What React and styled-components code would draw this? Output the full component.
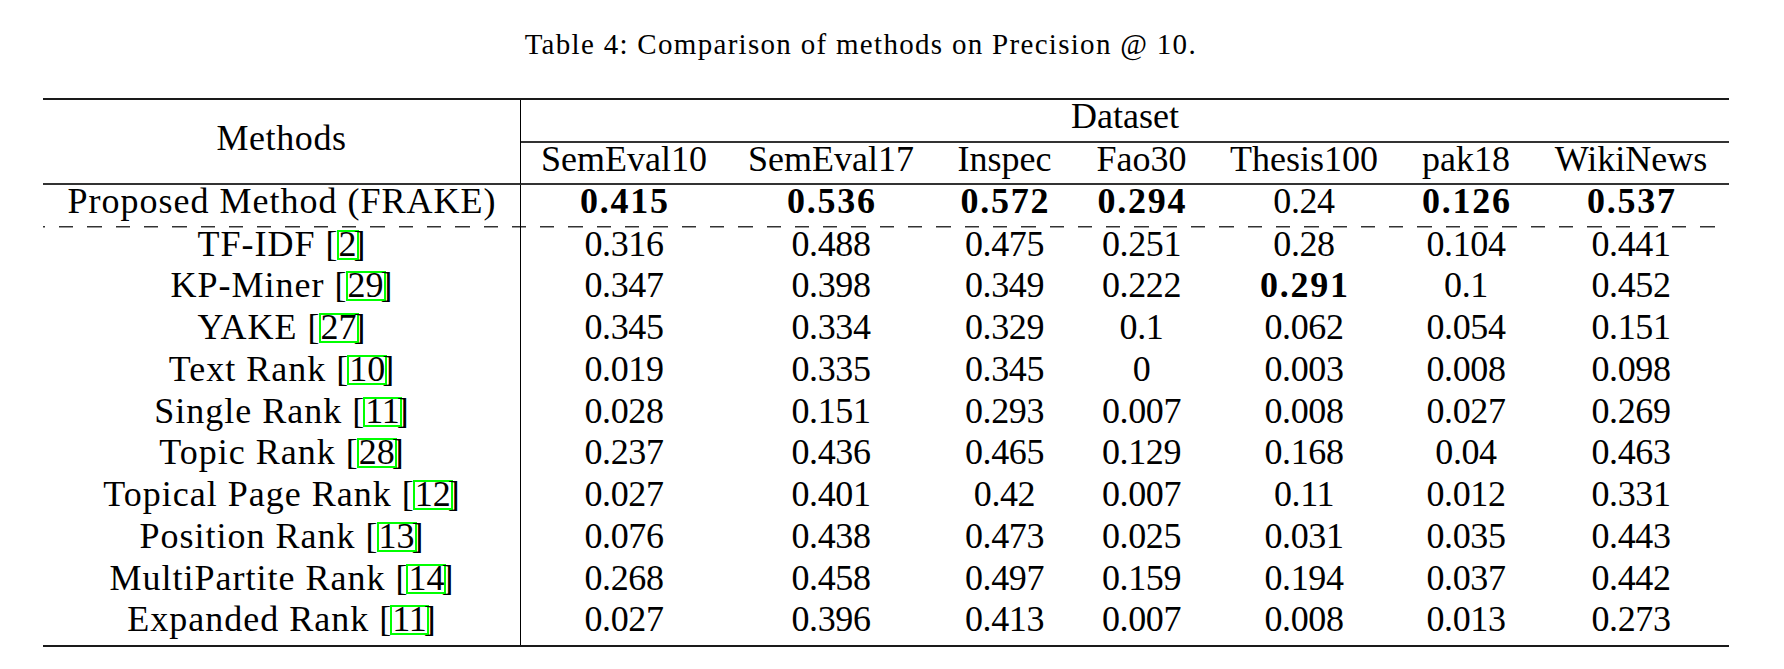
import React from "react";
import styled, { createGlobalStyle, css } from "styled-components";

const GlobalStyle = createGlobalStyle`
  html, body { margin: 0; padding: 0; }
  body, body * {
    font-family: "Liberation Serif", "Times New Roman", Times, serif !important;
  }
`;

const COLS = "478px 206px 208px 139px 135px 190px 134px 196px";

const Page = styled.div`
  padding: 24px 0 0 43px;
  color: #000;
`;

const Caption = styled.div`
  width: 1633px;
  text-align: center;
  font-size: 29px;
  line-height: 40px;
  letter-spacing: 1.3px;
  padding-left: 1.3px;
  margin-bottom: 34px;
`;

const Table = styled.div`
  width: 1686px;
  border-top: 2px solid #1a1a1a;
  border-bottom: 2px solid #1a1a1a;
  font-size: 36px;
  line-height: 32px;
`;

const Head = styled.div`
  display: grid;
  grid-template-columns: ${COLS};
  grid-template-rows: 43px 42px;
`;

const HeadCell = styled.div`
  text-align: center;
  border-bottom: 2px solid #333;
`;

const MethodsHead = styled(HeadCell)`
  grid-row: 1 / 3;
  grid-column: 1;
  border-right: 1px solid #000;
  padding-top: 22px;
  letter-spacing: 0.6px;
`;

const DatasetHead = styled(HeadCell)`
  grid-row: 1;
  grid-column: 2 / 9;
`;

const ColHead = styled(HeadCell)`
  grid-row: 2;
`;

const Row = styled.div`
  display: grid;
  grid-template-columns: ${COLS};
  height: ${(p) => p.$h}px;
  ${(p) =>
    p.$dashed &&
    css`
      background-image: repeating-linear-gradient(
        to right,
        #333 0 2.1px,
        transparent 2.1px 16.1px,
        #333 16.1px 28.3px
      );
      background-size: 100% 1.5px;
      background-position: left bottom;
      background-repeat: no-repeat;
    `}
`;

const MethodCell = styled.div`
  border-right: 1px solid #000;
  text-align: center;
  letter-spacing: 1px;
  padding-left: 1px;
`;

const Num = styled.div`
  text-align: center;
  font-weight: ${(p) => (p.$bold ? 700 : 400)};
  letter-spacing: ${(p) => (p.$bold ? "1.8px" : "-0.4px")};
  padding-left: ${(p) => (p.$bold ? "1.8px" : "0")};
`;

const OpenBracket = styled.span`
  margin-right: -2px;
`;

const CloseBracket = styled.span`
  margin-left: -5px;
`;

const CiteBox = styled.span`
  display: inline-block;
  border: 2px solid #00ff00;
  line-height: 24px;
  padding: 0 0 2px 0;
  letter-spacing: 0;
`;

const datasets = [
  "SemEval10",
  "SemEval17",
  "Inspec",
  "Fao30",
  "Thesis100",
  "pak18",
  "WikiNews",
];

const proposed = [
  ["0.415", true],
  ["0.536", true],
  ["0.572", true],
  ["0.294", true],
  ["0.24", false],
  ["0.126", true],
  ["0.537", true],
];

const rows = [
  ["TF-IDF", "2", ["0.316", "0.488", "0.475", "0.251", "0.28", "0.104", "0.441"]],
  ["KP-Miner", "29", ["0.347", "0.398", "0.349", "0.222", "*0.291", "0.1", "0.452"]],
  ["YAKE", "27", ["0.345", "0.334", "0.329", "0.1", "0.062", "0.054", "0.151"]],
  ["Text Rank", "10", ["0.019", "0.335", "0.345", "0", "0.003", "0.008", "0.098"]],
  ["Single Rank", "11", ["0.028", "0.151", "0.293", "0.007", "0.008", "0.027", "0.269"]],
  ["Topic Rank", "28", ["0.237", "0.436", "0.465", "0.129", "0.168", "0.04", "0.463"]],
  ["Topical Page Rank", "12", ["0.027", "0.401", "0.42", "0.007", "0.11", "0.012", "0.331"]],
  ["Position Rank", "13", ["0.076", "0.438", "0.473", "0.025", "0.031", "0.035", "0.443"]],
  ["MultiPartite Rank", "14", ["0.268", "0.458", "0.497", "0.159", "0.194", "0.037", "0.442"]],
  ["Expanded Rank", "11", ["0.027", "0.396", "0.413", "0.007", "0.008", "0.013", "0.273"]],
];

function Cite({ n }) {
  return (
    <>
      <OpenBracket>[</OpenBracket>
      <CiteBox>{n}</CiteBox>
      <CloseBracket>]</CloseBracket>
    </>
  );
}

export default function App() {
  return (
    <>
      <GlobalStyle />
      <Page>
        <Caption>Table 4: Comparison of methods on Precision @ 10.</Caption>
        <Table>
          <Head>
            <MethodsHead>Methods</MethodsHead>
            <DatasetHead>Dataset</DatasetHead>
            {datasets.map((d) => (
              <ColHead key={d}>{d}</ColHead>
            ))}
          </Head>
          <Row $h={42.5} $dashed>
            <MethodCell>Proposed Method (FRAKE)</MethodCell>
            {proposed.map(([v, b], i) => (
              <Num key={i} $bold={b}>
                {v}
              </Num>
            ))}
          </Row>
          {rows.map(([name, ref, vals]) => (
            <Row key={name} $h={41.75}>
              <MethodCell>
                {name} <Cite n={ref} />
              </MethodCell>
              {vals.map((v, i) => {
                const bold = v.startsWith("*");
                return (
                  <Num key={i} $bold={bold}>
                    {bold ? v.slice(1) : v}
                  </Num>
                );
              })}
            </Row>
          ))}
        </Table>
      </Page>
    </>
  );
}
